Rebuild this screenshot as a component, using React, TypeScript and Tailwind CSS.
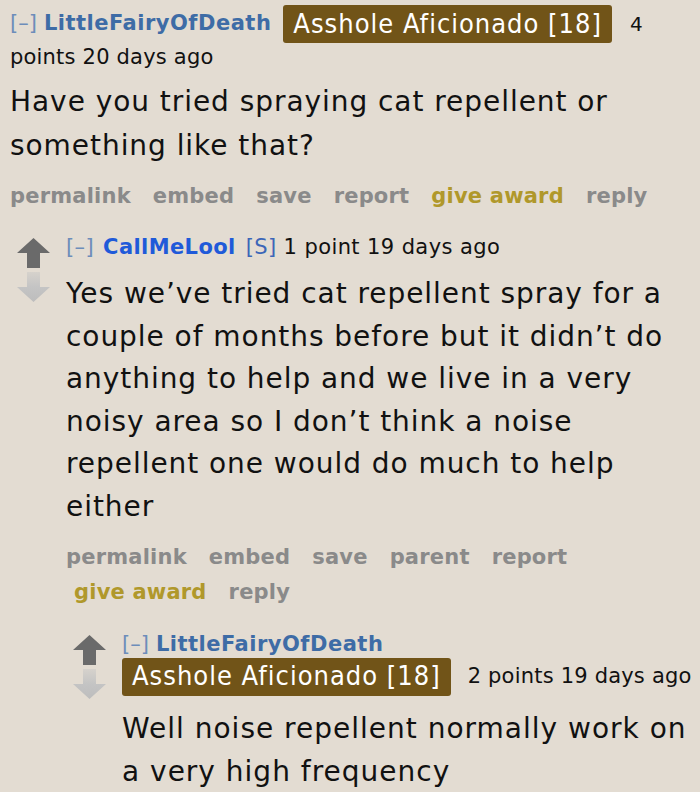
import React from "react";

function Arrows() {
  return (
    <div className="flex flex-col items-center w-[34px]">
      <svg width="33" height="30" viewBox="0 0 33 30">
        <polygon points="16.5,0 33,15 23,15 23,30 10,30 10,15 0,15" fill="#6a6a6a" />
      </svg>
      <svg width="33" height="30" viewBox="0 0 33 30" className="mt-[4px]">
        <defs>
          <linearGradient id="dg" x1="0" y1="0" x2="0" y2="1">
            <stop offset="0" stopColor="#d6d2cc" />
            <stop offset="0.5" stopColor="#c4c4c4" />
            <stop offset="1" stopColor="#bdbdbd" />
          </linearGradient>
        </defs>
        <polygon points="10,0 23,0 23,15 33,15 16.5,30 0,15 10,15" fill="url(#dg)" />
      </svg>
    </div>
  );
}

function Badge() {
  return (
    <span className="inline-flex items-center h-[38px] px-[10px] rounded-[3px] bg-[#715418] text-white text-[27px] font-['DejaVu_Sans_Condensed','DejaVu_Sans',sans-serif] tracking-[1px]">
      Asshole Aficionado [18]
    </span>
  );
}

function Action({ children, gold }: { children: React.ReactNode; gold?: boolean }) {
  return (
    <span className={`font-bold ${gold ? "text-[#b0982b]" : "text-[#8a8a8a]"}`}>{children}</span>
  );
}

export default function App() {
  return (
    <div className="min-h-[792px] w-[700px] overflow-hidden bg-[#e3dcd2] text-[#111] font-['DejaVu_Sans',sans-serif]">
      <div className="pl-[10px] pt-[5px]">
        <div className="flex items-center h-[38px] text-[21px]">
          <span className="text-[#6d8dba]">[–]</span>
          <span className="ml-[7px] font-bold text-[#3e6ca6] tracking-[0.5px]">LittleFairyOfDeath</span>
          <span className="ml-[12px]"><Badge /></span>
          <span className="ml-[18px] text-[20px]">4</span>
        </div>
        <div className="text-[21px] leading-[28px] tracking-[0.2px]">points 20 days ago</div>
        <div className="mt-[9px] text-[28px] leading-[44px] w-[680px] tracking-[0.95px]">
          Have you tried spraying cat repellent or something like that?
        </div>
        <div className="mt-[13px] flex gap-[22px] text-[21px] leading-[30px] tracking-[0.2px]">
          <Action>permalink</Action>
          <Action>embed</Action>
          <Action>save</Action>
          <Action>report</Action>
          <Action gold>give award</Action>
          <Action>reply</Action>
        </div>

        <div className="mt-[22px] flex">
          <div className="pt-[5px] ml-[6px] w-[50px]">
            <Arrows />
          </div>
          <div className="flex-1">
            <div className="text-[21px] leading-[28px] flex tracking-[0.4px]">
              <span className="text-[#6d8dba]">[–]</span>
              <span className="ml-[9px] font-bold text-[#1f5ad9]">CallMeLool</span>
              <span className="ml-[10px] text-[#3c66b8]">[S]</span>
              <span className="ml-[7px]">1 point 19 days ago</span>
            </div>
            <div className="mt-[12px] text-[28px] leading-[42.6px] w-[624px] tracking-[0.95px]">
              Yes we’ve tried cat repellent spray for a couple of months before but it didn’t do anything to help and we live in a very noisy area so I don’t think a noise repellent one would do much to help either
            </div>
            <div className="mt-[11px] text-[21px] leading-[35px] tracking-[0.2px]">
              <div className="flex gap-[22px]">
                <Action>permalink</Action>
                <Action>embed</Action>
                <Action>save</Action>
                <Action>parent</Action>
                <Action>report</Action>
              </div>
              <div className="flex gap-[22px] pl-[8px]">
                <Action gold>give award</Action>
                <Action>reply</Action>
              </div>
            </div>

            <div className="mt-[20px] flex">
              <div className="pt-[5px] ml-[6px] w-[50px]">
                <Arrows />
              </div>
              <div className="flex-1">
                <div className="text-[21px] leading-[28px] flex">
                  <span className="text-[#6d8dba]">[–]</span>
                  <span className="ml-[7px] font-bold text-[#3e6ca6] tracking-[0.5px]">LittleFairyOfDeath</span>
                </div>
                <div className="flex items-center">
                  <Badge />
                  <span className="ml-[17px] text-[21px] tracking-[0.2px]">2 points 19 days ago</span>
                </div>
                <div className="mt-[11px] text-[28px] leading-[43px] w-[574px] tracking-[1px]">
                  Well noise repellent normally work on a very high frequency
                </div>
              </div>
            </div>
          </div>
        </div>
      </div>
    </div>
  );
}
